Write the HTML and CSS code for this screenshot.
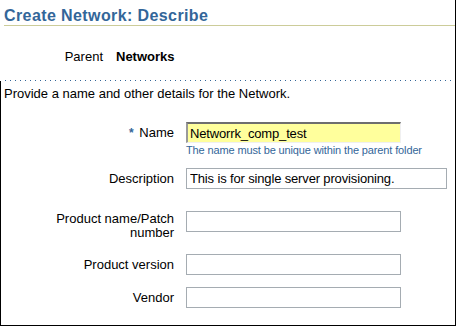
FILE: index.html
```html
<!DOCTYPE html>
<html>
<head>
  <link rel="stylesheet" href="styles.css">
</head>
<body>
  <div class="page">
    <h1 class="page-title">Create Network: Describe</h1>
    <div class="parent-row">
      <span class="parent-label">Parent</span>
      <span class="parent-value">Networks</span>
    </div>
    <div class="dotted-rule"></div>
    <div class="content">
      <p class="intro">Provide a name and other details for the Network.</p>
      <div class="form">
        <div class="row">
          <label class="field-label"><span class="required">*</span> Name</label>
          <input class="field field-required" type="text" value="Networrk_comp_test">
        </div>
        <div class="row row-help">
          <span class="field-label"></span>
          <span class="help">The name must be unique within the parent folder</span>
        </div>
        <div class="row row-desc">
          <label class="field-label">Description</label>
          <input class="field field-wide" type="text" value="This is for single server provisioning.">
        </div>
        <div class="row row-top row-spaced">
          <label class="field-label">Product name/Patch number</label>
          <input class="field" type="text">
        </div>
        <div class="row row-after-wrap">
          <label class="field-label">Product version</label>
          <input class="field" type="text">
        </div>
        <div class="row">
          <label class="field-label">Vendor</label>
          <input class="field" type="text">
        </div>
      </div>
    </div>
  </div>
</body>
</html>
```

FILE: styles.css
```css
body {
  margin: 0;
  background: white;
  font-family: 'Liberation Sans', Arial, sans-serif;
  font-size: 13px;
  color: #000;
}
.page {
  width: 455px;
  height: 325px;
  border-right: 1px solid #000;
  border-bottom: 1px solid #000;
  display: flex;
  flex-direction: column;
}
.page-title {
  margin: 0 0 0 4px;
  padding-top: 6px;
  font-size: 16px;
  line-height: 19px;
  font-weight: bold;
  letter-spacing: 0.4px;
  color: #336699;
  border-bottom: 1px solid #cccc99;
}
.parent-row {
  display: grid;
  grid-template-columns: 103px auto;
  column-gap: 13px;
  margin-top: 24px;
  line-height: 14px;
}
.parent-label {
  text-align: right;
}
.parent-value {
  font-weight: bold;
}
.dotted-rule {
  height: 1px;
  margin: 16px 0 0 5px;
  background: repeating-linear-gradient(to right, #336699 0 1px, transparent 1px 5px);
}
.content {
  flex: 1;
  border-left: 1px solid #000;
  padding: 6px 0 0 3px;
}
.intro {
  margin: 0;
  line-height: 14px;
}
.form {
  margin-top: 21px;
  margin-left: -3px;
  display: flex;
  flex-direction: column;
}
.row {
  display: grid;
  grid-template-columns: 173px auto;
  column-gap: 12px;
  align-items: center;
  margin-top: 12px;
}
.row:first-child {
  margin-top: 0;
}
.row-help {
  margin-top: 1px;
}
.row-desc {
  margin-top: 11px;
}
.row-spaced {
  margin-top: 22px;
}
.row-top {
  align-items: start;
}
.row-top .field-label {
  padding-top: 1px;
  padding-left: 45px;
}
.row-after-wrap {
  margin-top: 14px;
}
.field-label {
  text-align: right;
  line-height: 14px;
}
.required {
  color: #336699;
  font-weight: bold;
  font-size: 12px;
  margin-right: 2px;
}
.help {
  font-size: 11px;
  letter-spacing: -0.13px;
  line-height: 13px;
  color: #336699;
}
.field {
  box-sizing: border-box;
  width: 215px;
  height: 21px;
  margin: 0;
  padding: 0 3px;
  border: 1px solid #a5acb2;
  font-family: 'Liberation Sans', Arial, sans-serif;
  font-size: 13px;
  letter-spacing: -0.15px;
  color: #000;
  background: white;
}
.field-wide {
  width: 261px;
}
.field-required {
  background: #ffff9c;
  border-top: 2px solid #6e6e6e;
  border-left: 2px solid #9a9a9a;
  border-right: 1px solid #f0f0f0;
  border-bottom: 1px solid #f0f0f0;
  padding-left: 2px;
}
```
